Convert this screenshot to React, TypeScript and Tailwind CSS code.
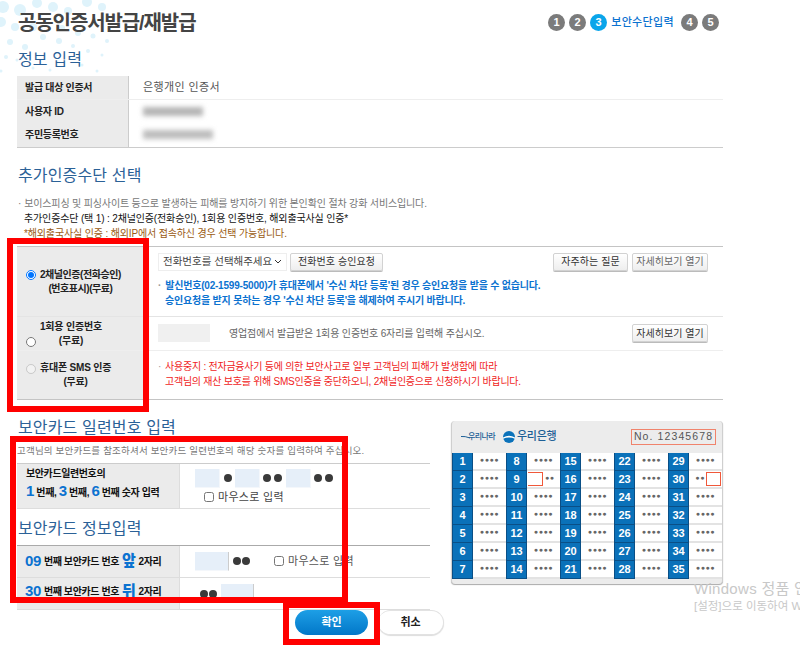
import React from "react";

const H = ({ children, className = "" }: { children: React.ReactNode; className?: string }) => (
  <h2 className={`text-[16px] leading-[20px] font-normal text-[#2b6197] tracking-[0.15px] pl-[1px] ${className}`}>{children}</h2>
);

const Step = ({ n, on = false }: { n: number; on?: boolean }) => (
  <span className={`w-[17px] h-[17px] rounded-full flex items-center justify-center text-white text-[11px] font-bold ${on ? "bg-[#0aa5ea]" : "bg-[#7b7b7b]"}`}>{n}</span>
);

const Btn = ({ children, className = "" }: { children: React.ReactNode; className?: string }) => (
  <span className={`h-[18px] flex items-center justify-center border border-[#d2d2d2] rounded-[2px] bg-gradient-to-b from-white to-[#eeeeee] text-[10px] tracking-[0.05px] text-[#333] shadow-[0_1px_0_#bbb] whitespace-nowrap ${className}`}>{children}</span>
);

const Dot = () => <span className="w-[8px] h-[8px] rounded-full bg-[#3a3a3a] inline-block" />;

const Input = ({ className = "" }: { className?: string }) => (
  <span className={`block bg-[#e6eff9] border-r border-b border-[#f4f7fb] h-[19px] ${className}`} />
);

const Cell = ({ n, kind }: { n: number; kind?: "l" | "r" }) => (
  <div className="flex h-[18px]">
    <span className="w-[21px] bg-[#0a71b9] border-x border-[#0a4f86] border-b border-b-[#0a4f86] text-white text-[11px] font-bold flex items-center justify-center">{n}</span>
    {kind === "l" ? (
      <span className="w-[33px] bg-white border-b-2 border-[#e3e3e3] flex items-center text-[#666] text-[7px] tracking-[0.6px]">
        <i className="w-[15px] h-[14px] border border-[#f0583a] border-l-0 ml-[1px] mr-[2px] bg-white" /><b>●●</b>
      </span>
    ) : kind === "r" ? (
      <span className="w-[33px] bg-white border-b-2 border-[#e3e3e3] flex items-center justify-end pr-[1px] text-[#666] text-[7px] tracking-[0.6px]">
        <b>●●</b><i className="w-[15px] h-[14px] border border-[#f0583a] ml-[1px] bg-white" />
      </span>
    ) : (
      <span className="w-[33px] bg-white border-b-2 border-[#e3e3e3] flex items-center justify-center text-[#666] text-[7px] tracking-[0.6px]"><b>●●●●</b></span>
    )}
  </div>
);

const Card = () => (
  <div className="w-[272px] h-[163px] rounded-[4px] border-x border-[#cfcfcf] bg-[#ececec] shadow-[0_1px_1px_#aaa] overflow-hidden flex flex-col">
    <div className="h-[32px] flex items-center pl-[9px] pr-[6px]">
      <span className="relative w-[38px] pl-[7px] text-[8px] font-medium text-[#1d5f96] tracking-[-0.6px] whitespace-nowrap">
        우리나라
        <svg className="absolute left-0 top-[4px]" width="9" height="5" viewBox="0 0 9 5">
          <path d="M0 1.5 Q4 1 9 3" fill="none" stroke="#1d5f96" strokeWidth="1" />
        </svg>
      </span>
      <svg width="12" height="12" viewBox="0 0 13 13" className="ml-[4px]">
        <circle cx="6.5" cy="6.5" r="6.5" fill="#0b72ba" />
        <path d="M0 7 Q6.5 3.5 13 7 L13 8.4 Q6.5 5.6 0 8.4Z" fill="#ffffff" />
      </svg>
      <span className="text-[11px] font-medium text-[#1d5f96] ml-[2px] tracking-[-0.3px] whitespace-nowrap">우리은행</span>
      <span className="ml-auto w-[85px] h-[16px] border border-[#f0836c] text-[10.5px] text-[#555] font-medium tracking-[1.1px] flex items-center justify-center whitespace-nowrap">No. 12345678</span>
    </div>
    <div className="grid grid-cols-5 grid-rows-7 grid-flow-col">
      {Array.from({ length: 35 }, (_, i) => i + 1).map((n) => (
        <Cell key={n} n={n} kind={n === 9 ? "l" : n === 30 ? "r" : undefined} />
      ))}
    </div>
  </div>
);

const Red = ({ className }: { className: string }) => (
  <div className={`absolute border-[6px] border-[#ff0000] ${className}`} />
);

const bubbles = [[3,7,6],[20,10,6],[37,3,5],[53,7,5],[68,11,4],[87,2,5],[102,7,4],[1,22,5],[15,27,4],[33,27,4],[43,37,3],[62,28,3],[78,33,3],[93,36,2.5],[10,42,3],[25,47,3],[59,41,3],[73,46,2],[88,51,2],[107,41,2],[6,57,2],[102,55,1.5],[82,65,1.5],[50,70,1.5],[33,68,1.5],[1,71,1.5],[97,71,1.5],[17,60,1.5]];

export default function App() {
  return (
    <div className="relative w-[800px] h-[645px] overflow-hidden bg-white px-[17px] font-['Liberation_Sans','Noto_Sans_CJK_KR',sans-serif]">
      <svg className="absolute left-0 top-0" width="120" height="80" viewBox="0 0 120 80">
        {bubbles.map(([x, y, r], i) => (
          <circle key={i} cx={x} cy={y} r={r} fill="#dff3fb" />
        ))}
      </svg>
      <div className="relative w-[706px]">
        <div className="flex items-start justify-between h-[59px]">
          <h1 className="mt-[13px] ml-[1px] text-[20px] leading-[20px] font-bold text-[#444] tracking-[-1.1px]">공동인증서발급/재발급</h1>
          <div className="mt-[14px] mr-[4px] flex items-center gap-[4px]">
            <Step n={1} /><Step n={2} /><Step n={3} on />
            <span className="text-[11px] text-[#0b72d0] tracking-[0.35px] font-medium mr-[3px]">보안수단입력</span>
            <Step n={4} /><Step n={5} />
          </div>
        </div>

        <H className="-mt-[9px] mb-[6px]">정보 입력</H>
        <div className="border-b border-[#cccccc] text-[10px]">
          {[["발급 대상 인증서", <span className="text-[11px] tracking-[0.4px] text-[#555]">은행개인 인증서</span>],
            ["사용자 ID", <span className="block w-[60px] h-[9px] bg-[#b5b5b5] blur-[2.5px]" />],
            ["주민등록번호", <span className="block w-[70px] h-[9px] bg-[#bdbdbd] blur-[2.5px]" />]].map(([k, v], i) => (
            <div key={i} className={`flex h-[23.5px] ${i === 0 ? "border-b border-[#eeeeee]" : ""}`}>
              <div className="w-[112px] bg-[#ebebeb] border-r border-[#cccccc] pl-[8px] flex items-center font-bold text-[#222] tracking-[-0.3px]">{k}</div>
              <div className="pl-[14px] flex items-center">{v}</div>
            </div>
          ))}
        </div>

        <H className="mt-[18px]">추가인증수단 선택</H>
        <div className="mt-[10px] text-[10px] leading-[15px] tracking-[-0.15px] whitespace-nowrap">
          <p className="text-[#777] pl-[1px]"><span className="mr-[3px]">·</span>보이스피싱 및 피싱사이트 등으로 발생하는 피해를 방지하기 위한 본인확인 절차 강화 서비스입니다.</p>
          <p className="text-[#111] pl-[7px]">추가인증수단 (택 1) : 2채널인증(전화승인), 1회용 인증번호, 해외출국사실 인증*</p>
          <p className="text-[#9a5a12] pl-[7px]">*해외출국사실 인증 : 해외IP에서 접속하신 경우 선택 가능합니다.</p>
        </div>

        <div className="mt-[5px] border-y border-[#c4c4c4] text-[10px]">
          <div className="flex h-[70px] border-b border-[#e4e4e4]">
            <div className="w-[128px] bg-[#ebebeb] flex items-center font-bold text-[#222] border-r border-[#dddddd]">
              <input type="radio" readOnly checked className="ml-[9px] mr-[5px] -mt-[12px] w-[10px] h-[10px] shrink-0" />
              <div className="text-center leading-[14px] mt-[2px] -ml-[1px] whitespace-nowrap tracking-[-0.45px]">2채널인증(전화승인)<br />(번호표시)(무료)</div>
            </div>
            <div className="flex-1 pl-[13px] pr-[15px] pt-[6px]">
              <div className="flex gap-[3px] items-center">
                <span className="w-[129px] h-[18px] border border-[#eeeeee] flex items-center justify-between px-[4px] text-[10.5px] text-[#444] whitespace-nowrap">전화번호를 선택해주세요<svg width="8" height="5" viewBox="0 0 8 5"><path d="M1 1l3 3 3-3" fill="none" stroke="#333" strokeWidth="1" /></svg></span>
                <Btn className="w-[93px]">전화번호 승인요청</Btn>
                <Btn className="w-[75px] ml-auto">자주하는 질문</Btn>
                <Btn className="w-[76px] ml-[1px] text-[#666]">자세히보기 열기</Btn>
              </div>
              <div className="mt-[7px] text-[10px] leading-[15px] font-bold text-[#0b72d0] tracking-[-0.2px] whitespace-nowrap">
                <p><span className="text-[#999] mr-[4px]">·</span>발신번호(02-1599-5000)가 휴대폰에서 '수신 차단 등록'된 경우 승인요청을 받을 수 없습니다.</p>
                <p className="pl-[7px]">승인요청을 받지 못하는 경우 '수신 차단 등록'을 해제하여 주시기 바랍니다.</p>
              </div>
            </div>
          </div>
          <div className="flex h-[34px] border-b border-[#eeeeee]">
            <div className="w-[128px] bg-[#ebebeb] flex font-bold text-[#222] border-r border-[#dddddd] relative">
              <input type="radio" readOnly className="absolute left-[9px] top-[20px] w-[10px] h-[10px]" />
              <div className="ml-[23px] pt-[3px] text-center leading-[14px] whitespace-nowrap tracking-[-0.2px]">1회용 인증번호<br />(무료)</div>
            </div>
            <div className="flex-1 pl-[13px] pr-[15px] flex items-center">
              <span className="w-[52px] h-[18px] bg-[#f0f0f0]" />
              <span className="ml-[19px] text-[10px] text-[#666] tracking-[-0.15px] whitespace-nowrap">영업점에서 발급받은 1회용 인증번호 6자리를 입력해 주십시오.</span>
              <Btn className="w-[76px] ml-auto">자세히보기 열기</Btn>
            </div>
          </div>
          <div className="flex h-[48px]">
            <div className="w-[128px] bg-[#ebebeb] flex font-bold text-[#222] border-r border-[#dddddd] relative">
              <input type="radio" readOnly disabled className="absolute left-[9px] top-[13px] w-[10px] h-[10px]" />
              <div className="ml-[23px] pt-[10px] text-center leading-[14px] whitespace-nowrap tracking-[-0.2px]">휴대폰 SMS 인증<br />(무료)</div>
            </div>
            <div className="flex-1 pl-[13px] pt-[8px] text-[10px] leading-[15px] text-[#f01c1c] tracking-[-0.25px] whitespace-nowrap">
              <p><span className="text-[#999] mr-[4px]">·</span>사용중지 : 전자금융사기 등에 의한 보안사고로 일부 고객님의 피해가 발생함에 따라</p>
              <p className="pl-[7px]">고객님의 재산 보호를 위해 SMS인증을 중단하오니, 2채널인증으로 신청하시기 바랍니다.</p>
            </div>
          </div>
        </div>

        <div className="flex items-start justify-between mt-[22px]">
          <div className="w-[413px]">
            <H className="-mt-[4px]">보안카드 일련번호 입력</H>
            <p className="mt-[6px] text-[9.5px] leading-[14px] text-[#777] tracking-[0.2px] whitespace-nowrap">고객님의 보안카드를 참조하셔서 보안카드 일련번호의 해당 숫자를 입력하여 주십시오.</p>
            <div className="mt-[5px] flex h-[46px] border-y border-[#dddddd] border-t-[#cccccc]">
              <div className="w-[163px] bg-[#ebebeb] border-r border-[#dddddd] pl-[9px] pt-[3px] font-bold text-[10px] text-[#111] tracking-[-0.4px] whitespace-nowrap">
                <div className="leading-[14px]">보안카드일련번호의</div>
                <div className="leading-[20px]"><b className="text-[15px] text-[#0b72d0]">1</b> 번째, <b className="text-[15px] text-[#0b72d0]">3</b> 번째, <b className="text-[15px] text-[#0b72d0]">6</b> 번째 숫자 입력</div>
              </div>
              <div className="pl-[15px] pt-[5px]">
                <div className="flex items-center">
                  <Input className="w-[25px]" /><span className="ml-[4px] mr-[3px] flex"><Dot /></span>
                  <Input className="w-[25px]" /><span className="ml-[3px] mr-[4px] flex gap-[3px]"><Dot /><Dot /></span>
                  <Input className="w-[25px]" /><span className="ml-[3px] flex gap-[3px]"><Dot /><Dot /></span>
                </div>
                <label className="flex items-center mt-[1px] ml-[9px] text-[11px] text-[#444] tracking-[0.3px]"><input type="checkbox" readOnly className="w-[10px] h-[10px] mr-[4px]" />마우스로 입력</label>
              </div>
            </div>
            <H className="mt-[10px]">보안카드 정보입력</H>
            <div className="mt-[6px] border-y border-[#aaaaaa] border-b-[#dddddd] text-[10px] font-bold text-[#111] tracking-[-0.4px]">
              <div className="flex h-[32px] border-b border-[#dddddd]">
                <div className="w-[163px] bg-[#ebebeb] border-r border-[#dddddd] pl-[8px] flex items-center whitespace-nowrap gap-[3px]"><b className="text-[15px] text-[#0b72d0]">09</b>번째 보안카드 번호 <b className="text-[15px] text-[#0b72d0]">앞</b> 2자리</div>
                <div className="pl-[15px] flex items-center font-normal">
                  <Input className="w-[34px] h-[18px] border-r-[#ccc]" /><span className="ml-[4px] flex gap-[1px]"><Dot /><Dot /></span>
                  <label className="flex items-center ml-[24px] text-[11px] text-[#555] tracking-[0.3px]"><input type="checkbox" readOnly className="w-[10px] h-[10px] mr-[4px]" />마우스로 입력</label>
                </div>
              </div>
              <div className="flex h-[31px]">
                <div className="w-[163px] bg-[#ebebeb] border-r border-[#dddddd] pl-[8px] pb-[3px] flex items-center whitespace-nowrap gap-[3px]"><b className="text-[15px] text-[#0b72d0]">30</b>번째 보안카드 번호 <b className="text-[15px] text-[#0b72d0]">뒤</b> 2자리</div>
                <div className="pl-[20px] pt-[6px] flex items-start">
                  <span className="mr-[4px] mt-[6px] flex gap-[1px]"><Dot /><Dot /></span>
                  <Input className="w-[33px] h-[18px] border-r-[#ccc]" />
                </div>
              </div>
            </div>
          </div>
          <div className="-mt-[1px]"><Card /></div>
        </div>

        <div className="flex justify-center gap-[10px] mr-[1px]">
          <span className="w-[73px] h-[25px] rounded-full bg-gradient-to-b from-[#1d9fe6] to-[#0277c8] text-white text-[11px] font-bold flex items-center justify-center">확인</span>
          <span className="w-[66px] h-[25px] rounded-full border border-[#e2e2e2] border-l-0 bg-white text-[#222] text-[11px] font-bold flex items-center justify-center shadow-[0_1px_1px_#ddd]">취소</span>
        </div>
      </div>

      <Red className="left-[7px] top-[238px] w-[142px] h-[174px]" />
      <Red className="left-[10px] top-[436px] w-[338px] h-[167px]" />
      <Red className="left-[283px] top-[602px] w-[97px] h-[43px]" />

      <div className="absolute left-[694px] top-[579px] whitespace-nowrap text-[#c8c8c8]">
        <div className="text-[15px] leading-[20px] tracking-[0.3px]">Windows 정품 인증</div>
        <div className="text-[11.5px] leading-[14px]">[설정]으로 이동하여 Windows를 정품 인증합니다.</div>
      </div>
    </div>
  );
}
